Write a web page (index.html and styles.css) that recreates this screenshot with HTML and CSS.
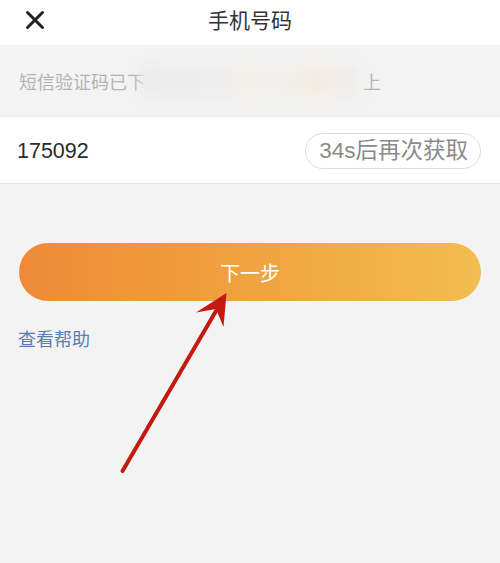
FILE: index.html
```html
<!DOCTYPE html>
<html lang="zh">
<head>
<meta charset="utf-8">
<link rel="stylesheet" href="styles.css">
</head>
<body>
<div class="page">
  <header class="topbar">
    <svg class="close" width="20" height="20" viewBox="0 0 20 20"><path d="M2.5 2.5 L17.5 17.5 M17.5 2.5 L2.5 17.5" stroke="#222" stroke-width="3" stroke-linecap="round"/></svg>
    <div class="title">手机号码</div>
  </header>
  <section class="notice">
    <span class="notice-text">短信验证码已下</span><span class="masked"></span><span class="notice-text tail">上</span>
  </section>
  <section class="code-row">
    <span class="code">175092</span>
    <span class="resend">34s后再次获取</span>
  </section>
  <div class="actions">
    <button class="next">下一步</button>
    <a class="help">查看帮助</a>
  </div>
  <svg class="arrow" width="500" height="563" viewBox="0 0 500 563">
    <line x1="122.5" y1="471" x2="216" y2="311" stroke="#c4190f" stroke-width="4" stroke-linecap="round"/>
    <path d="M226.5 293 L196 312.5 L216 309 L223.5 327 Z" fill="#c4190f"/>
  </svg>
</div>
</body>
</html>
```
FILE: styles.css
```css
* { box-sizing: border-box; }
html, body { margin: 0; padding: 0; }
body {
  width: 500px;
  height: 563px;
  overflow: hidden;
  background: #f3f3f3;
  font-family: "Noto Sans CJK SC", "Noto Sans", sans-serif;
}
.page { position: relative; width: 500px; height: 563px; }
.topbar {
  height: 45px;
  background: #fff;
  display: flex;
  align-items: center;
  justify-content: center;
  position: relative;
}
.close { position: absolute; left: 25px; top: 10px; }
.title {
  font-size: 21px;
  color: #333;
  line-height: 1;
  margin-top: -6px;
}
.notice {
  height: 72px;
  display: flex;
  align-items: center;
  padding-left: 19px;
  border-bottom: 1px solid #e6e6e6;
}
.notice-text {
  font-size: 18px;
  color: #b3b3b3;
  line-height: 1;
}
.masked {
  width: 220px;
  height: 32px;
  margin-left: -4px;
  margin-right: 2px;
  background: linear-gradient(90deg, #ebebeb 0%, #ededed 35%, #f4eee6 48%, #f0efed 62%, #f4ebe1 80%, #eeeeee 100%);
  filter: blur(6px);
}
.code-row {
  height: 67px;
  background: #fff;
  display: flex;
  align-items: center;
  justify-content: space-between;
  padding: 2px 19px 0 17px;
  border-bottom: 1px solid #e3e3e3;
}
.code {
  font-family: "Liberation Sans", Arial, sans-serif;
  font-size: 21.5px;
  color: #2b2b2b;
}
.resend {
  height: 36px;
  padding: 0 12px 0 13px;
  border: 1px solid #dcdcdc;
  border-radius: 18px;
  display: flex;
  align-items: center;
  font-size: 22.5px;
  color: #8a8a8a;
  font-family: "Liberation Sans", "Noto Sans CJK SC", sans-serif;
  line-height: 1;
}
.actions {
  padding: 59px 19px 0 19px;
  display: flex;
  flex-direction: column;
}
.next {
  height: 58px;
  border: none;
  border-radius: 29px;
  background: linear-gradient(90deg, #ee8a36 0%, #f0a03e 45%, #f3bd50 100%);
  color: #fff;
  font-family: "Noto Sans CJK SC", sans-serif;
  font-size: 20px;
  padding: 0;
}
.help {
  margin-top: 25px;
  font-size: 18px;
  line-height: 24px;
  color: #5a7cb3;
  margin-left: -1px;
}
.arrow { position: absolute; left: 0; top: 0; pointer-events: none; }
```
